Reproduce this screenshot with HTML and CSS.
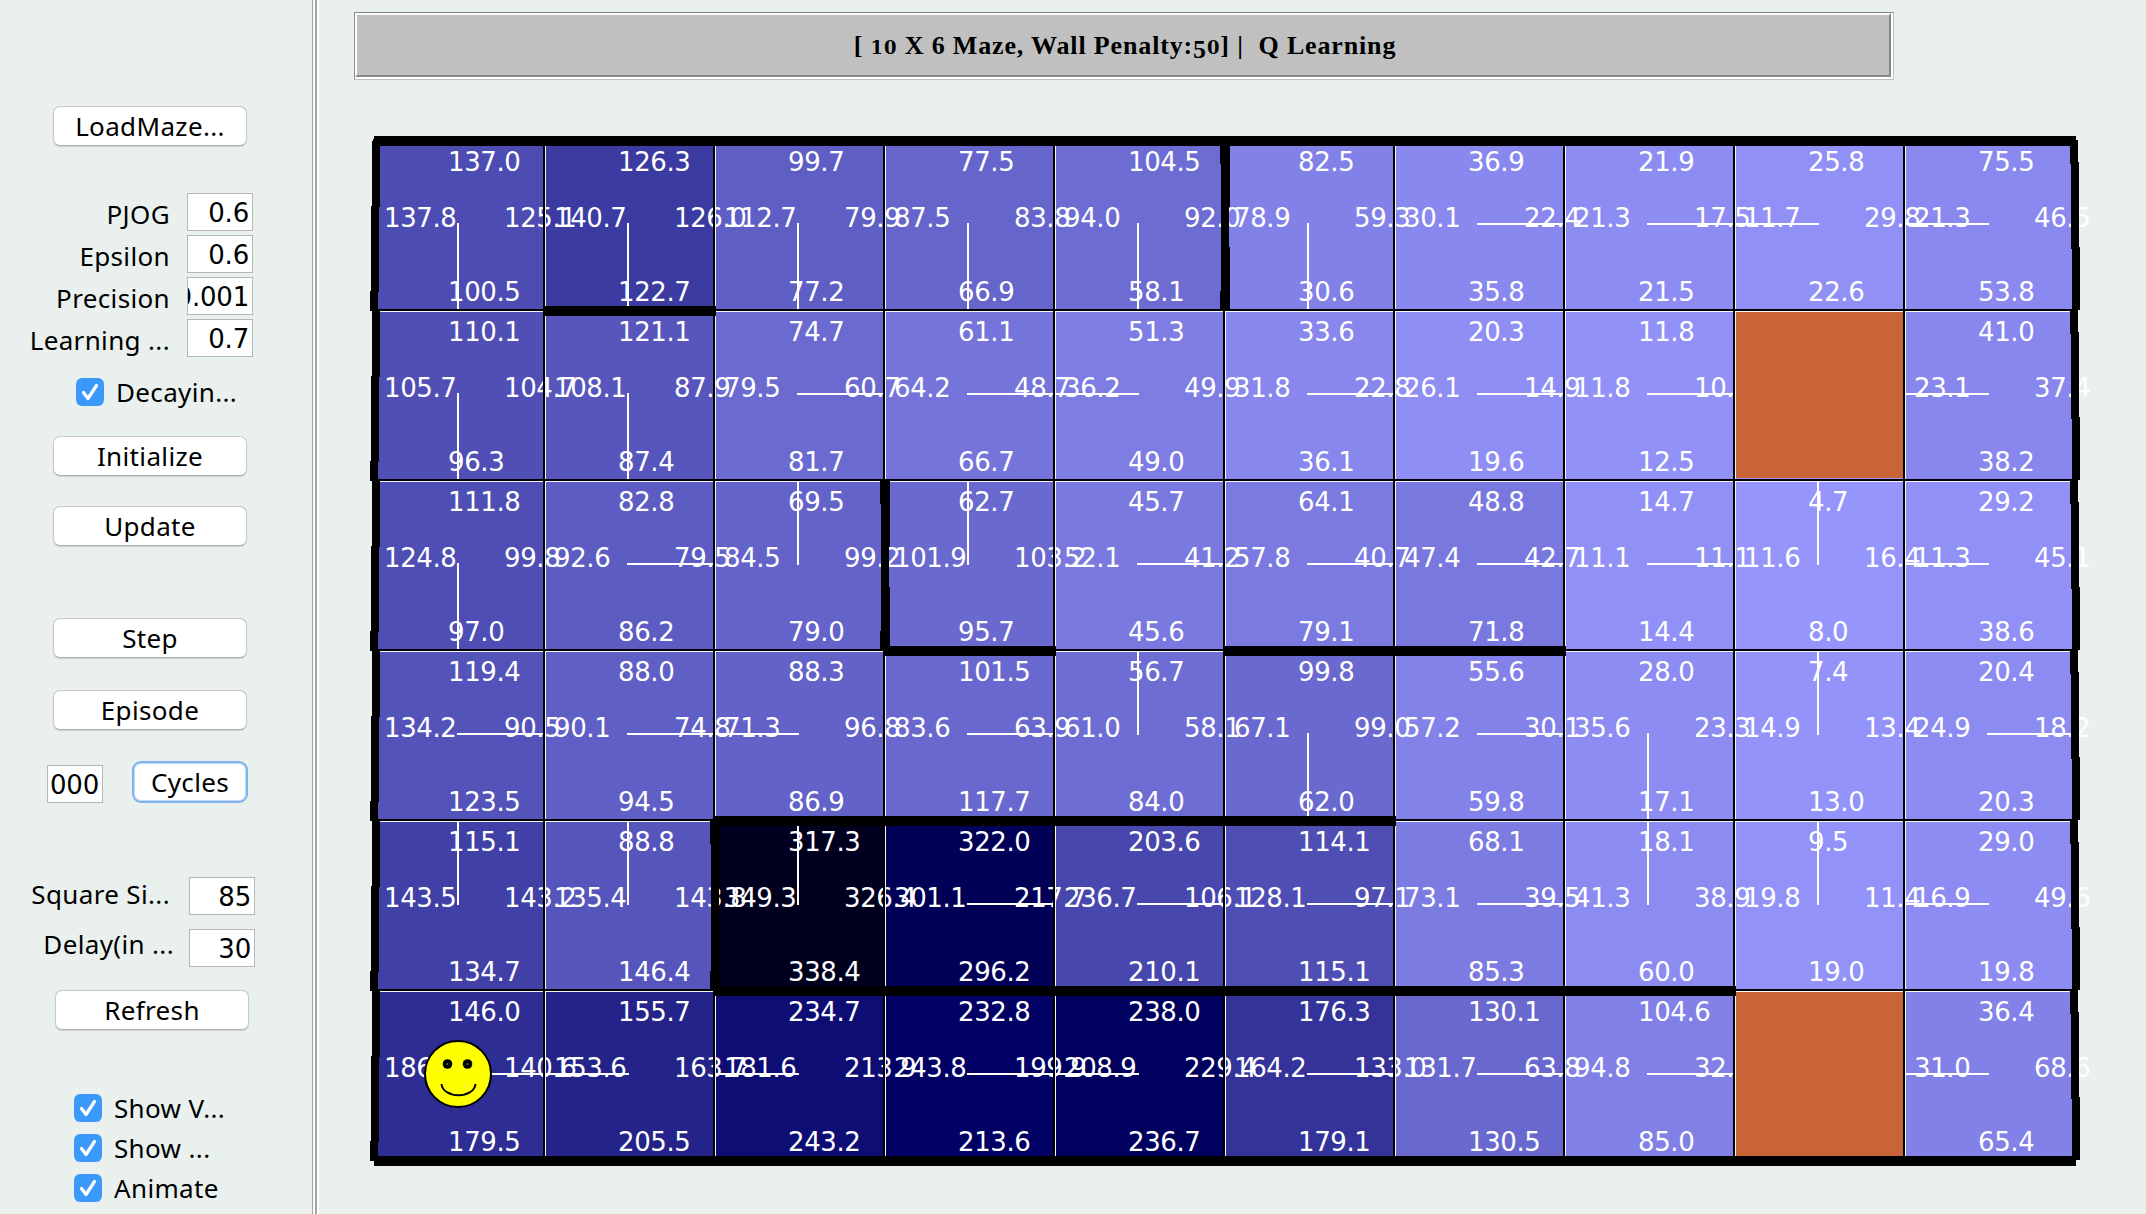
FILE: index.html
```html
<!DOCTYPE html>
<html lang="en">
<head>
<meta charset="utf-8">
<title>Q Learning Maze</title>
<link rel="stylesheet" href="styles.css">
</head>
<body>
<div class="app">
  <aside class="sidebar">
    <button class="btn load">LoadMaze...</button>
    <div class="params">
      <label class="param"><span class="name">PJOG</span><span class="field">0.6</span></label>
      <label class="param"><span class="name">Epsilon</span><span class="field">0.6</span></label>
      <label class="param"><span class="name">Precision</span><span class="field">0.001</span></label>
      <label class="param"><span class="name">Learning ...</span><span class="field">0.7</span></label>
    </div>
    <label class="check decay"><svg class="box" viewBox="0 0 28 28"><path d="M7.5 14.5 12 20.500 20.500 7.500"/></svg><span>Decayin...</span></label>
    <button class="btn init">Initialize</button>
    <button class="btn update">Update</button>
    <button class="btn step">Step</button>
    <button class="btn episode">Episode</button>
    <div class="cycles"><span class="field short">000</span><button class="btn focused">Cycles</button></div>
    <label class="param size"><span class="name">Square Si...</span><span class="field">85</span></label>
    <label class="param delay"><span class="name">Delay(in ...</span><span class="field">30</span></label>
    <button class="btn refresh">Refresh</button>
    <div class="checks">
      <label class="check"><svg class="box" viewBox="0 0 28 28"><path d="M7.500 14.500 12 20.500 20.500 7.500"/></svg><span>Show V...</span></label>
      <label class="check"><svg class="box" viewBox="0 0 28 28"><path d="M7.500 14.500 12 20.500 20.500 7.500"/></svg><span>Show ...</span></label>
      <label class="check"><svg class="box" viewBox="0 0 28 28"><path d="M7.500 14.500 12 20.500 20.500 7.500"/></svg><span>Animate</span></label>
    </div>
  </aside>
  <div class="divider"></div>
  <main class="main">
    <div class="title"><h1>[ <span class="low">10</span> X 6 Maze, Wall Penalty:<span class="drop">5</span><span class="low">0</span>] |  Q Learning</h1></div>
    <div class="board">
      <div class="cells" id="cells"></div>
      <svg class="walls" id="walls" width="1700" height="1020"></svg>
      <svg class="agent" viewBox="0 0 68 70">
        <circle cx="34" cy="35" r="33" fill="#ff0" stroke="#000" stroke-width="2"/>
        <circle cx="23.500" cy="25" r="4.800"/><circle cx="43.500" cy="25" r="4.800"/>
        <circle cx="23.500" cy="25" r="1" fill="#770"/><circle cx="43.500" cy="25" r="1" fill="#770"/>
        <path d="M17.500 45C19 60 50 60 51.500 45" fill="none" stroke="#000" stroke-width="2"/>
      </svg>
    </div>
  </main>
</div>
<script src="maze.js"></script>
</body>
</html>
```
FILE: styles.css
```css
* { box-sizing: border-box; }
body {
  margin: 0;
  background: #eaf0ee;
  color: #000;
  font: 26px/40px "Noto Sans", "Open Sans", sans-serif;
  letter-spacing: .35px;
  overflow: hidden;
}
.app { display: flex; width: 2146px; height: 1214px; }

.sidebar { width: 312px; display: flex; flex-direction: column; align-items: flex-start; padding-top: 106px; }
.btn {
  flex: none;
  width: 194px;
  height: 40px;
  margin: 0 0 0 53px;
  padding: 0;
  border: 1px solid #c6c9c8;
  border-bottom-color: #adb0af;
  border-radius: 7px;
  background: #fff;
  box-shadow: 0 1px 1px rgba(0, 0, 0, .12);
  color: #000;
  font: inherit;
  letter-spacing: inherit;
  line-height: 38px;
  text-align: center;
}
.params { display: flex; flex-direction: column; gap: 4px; margin-top: 47px; }
.param { display: flex; height: 38px; }
.name { width: 170px; padding-top: 1px; text-align: right; white-space: nowrap; }
.field {
  display: flex;
  justify-content: flex-end;
  width: 66px;
  height: 38px;
  margin-left: 17px;
  padding-right: 3px;
  border: 1px solid #b4b8b7;
  background: #fff;
  font-family: "DejaVu Sans", sans-serif;
  letter-spacing: -.2px;
  line-height: 38px;
  overflow: hidden;
}
.check { display: flex; height: 28px; line-height: 28px; gap: 12px; margin-left: 74px; white-space: nowrap; }
.box { width: 28px; height: 28px; border-radius: 6px; background: #3b99fc; }
.box path { fill: none; stroke: #fff; stroke-width: 3.200; stroke-linecap: round; stroke-linejoin: round; }
.decay { margin: 21px 0 0 76px; }
.init { margin-top: 30px; }
.update { margin-top: 30px; }
.step { margin-top: 72px; }
.episode { margin-top: 32px; }
.cycles { display: flex; align-items: flex-end; margin-top: 31px; }
.field.short { width: 56px; margin-left: 47px; margin-bottom: 0; }
.btn.focused { width: 116px; height: 42px; margin-left: 29px; border: 2px solid #7fb1ea; border-radius: 9px; box-shadow: inset 0 0 1px 1px #bcd9f7; }
.size { margin-top: 74px; }
.size .field, .delay .field { width: 66px; line-height: 38px; }
.size .name { width: 170px; padding-top: 0; margin-top: -3px; }
.size .field { margin-left: 19px; }
.delay { margin-top: 14px; }
.delay .name { width: 174px; margin-top: -6px; }
.delay .field { margin-left: 15px; }
.refresh { margin: 23px 0 0 55px; }
.checks { display: flex; flex-direction: column; gap: 12px; margin-top: 64px; }

.divider {
  width: 7px;
  border-left: 1px solid #a3a5a4;
  background: linear-gradient(90deg, #fff 2px, #a3a5a4 2px 4px, #fff 4px);
}

.main { padding: 12px 0 0 35px; }
.title {
  width: 1540px;
  height: 68px;
  border: 1px solid #888;
  border-right-color: #c0c0c0;
  border-bottom-color: #c0c0c0;
  background: #fff;
  padding: 0 2px 2px 0;
}
.title h1 {
  height: 64px;
  margin: 0;
  padding-left: 4px;
  border: 2px solid #fff;
  border-right-color: #868686;
  border-bottom-color: #868686;
  background: #c0c0c0;
  font: bold 26px/62px "Liberation Serif", serif;
  letter-spacing: .85px;
  text-align: center;
  white-space: pre;
}
.low { font: bold 18px/20px "DejaVu Serif", serif; }
.drop { display: inline-block; line-height: 20px; vertical-align: -4px; }

.board { position: relative; width: 1700px; height: 1020px; margin: 60px 0 0 20px; }
.cells { display: grid; grid-template-columns: repeat(10, 170px); grid-auto-rows: 170px; }
.cell { position: relative; color: #fff; font: 26px/30px "DejaVu Sans", sans-serif; letter-spacing: -.4px; }
.value { position: absolute; z-index: 1; white-space: nowrap; }
.value.up { left: 74px; top: 7px; }
.value.left { left: 10px; top: 63px; }
.value.right { left: 130px; top: 63px; }
.value.down { left: 74px; top: 137px; }
.policy { position: absolute; background: #fff; z-index: 1; }
.policy.up { left: 83px; top: 1px; width: 2px; height: 84px; }
.policy.down { left: 83px; top: 83px; width: 2px; height: 87px; }
.policy.left { left: 1px; top: 83px; width: 84px; height: 2px; }
.policy.right { left: 83px; top: 83px; width: 87px; height: 2px; }
.walls { position: absolute; left: 0; top: 0; z-index: 2; overflow: visible; shape-rendering: crispEdges; }
.agent { position: absolute; left: 50px; top: 899px; width: 68px; height: 70px; z-index: 3; }
```
FILE: maze.js
```js
// Each cell: [up, left, right, down, policy]; null marks a goal.
const Q = [
  [["137.0","137.8","125.1","100.5","d"],["126.3","140.7","126.0","122.7","d"],["99.7","112.7","79.9","77.2","d"],["77.5","87.5","83.8","66.9","d"],["104.5","94.0","92.0","58.1","d"],["82.5","78.9","59.3","30.6","d"],["36.9","30.1","22.4","35.8","r"],["21.9","21.3","17.5","21.5","r"],["25.8","11.7","29.8","22.6","l"],["75.5","21.3","46.5","53.8","l"]],
  [["110.1","105.7","104.7","96.3","d"],["121.1","108.1","87.9","87.4","d"],["74.7","79.5","60.7","81.7","r"],["61.1","64.2","48.7","66.7","r"],["51.3","36.2","49.9","49.0","l"],["33.6","31.8","22.8","36.1","r"],["20.3","26.1","14.9","19.6","r"],["11.8","11.8","10.","12.5","r"],null,["41.0","23.1","37.4","38.2","l"]],
  [["111.8","124.8","99.8","97.0","d"],["82.8","92.6","79.5","86.2","r"],["69.5","84.5","99.2","79.0","u"],["62.7","101.9","103.2","95.7","u"],["45.7","52.1","41.2","45.6","r"],["64.1","57.8","40.7","79.1","r"],["48.8","47.4","42.7","71.8","r"],["14.7","11.1","11.1","14.4","r"],["4.7","11.6","16.4","8.0","u"],["29.2","11.3","45.1","38.6","l"]],
  [["119.4","134.2","90.5","123.5","r"],["88.0","90.1","74.8","94.5","r"],["88.3","71.3","96.8","86.9","l"],["101.5","83.6","63.9","117.7","r"],["56.7","61.0","58.1","84.0","u"],["99.8","67.1","99.0","62.0","d"],["55.6","57.2","30.1","59.8","r"],["28.0","35.6","23.3","17.1","d"],["7.4","14.9","13.4","13.0","u"],["20.4","24.9","18.2","20.3","r"]],
  [["115.1","143.5","143.2","134.7","u"],["88.8","135.4","143.8","146.4","u"],["317.3","349.3","326.4","338.4","u"],["322.0","301.1","217.7","296.2","r"],["203.6","236.7","106.1","210.1","r"],["114.1","128.1","97.1","115.1","r"],["68.1","73.1","39.5","85.3","r"],["18.1","41.3","38.9","60.0","u"],["9.5","19.8","11.4","19.0","u"],["29.0","16.9","49.6","19.8","l"]],
  [["146.0","186.0","140.6","179.5","r"],["155.7","153.6","163.7","205.5","l"],["234.7","181.6","213.9","243.2","l"],["232.8","243.8","199.9","213.6","r"],["238.0","208.9","229.4","236.7","l"],["176.3","164.2","133.0","179.1","r"],["130.1","131.7","63.8","130.5","r"],["104.6","94.8","32.","85.0","r"],null,["36.4","31.0","68.6","65.4","l"]]
];
const SIDES = ["up", "left", "right", "down"];
const NAMES = { u: "up", l: "left", r: "right", d: "down" };
const S = 170;

const cells = document.getElementById("cells");
const rects = [];
const rect = (x, y, w, h, fill = "#000") => rects.push(`<rect x="${x}" y="${y}" width="${w}" height="${h}" fill="${fill}"/>`);

Q.forEach((row, r) => row.forEach((cell, c) => {
  const el = document.createElement("div");
  el.className = "cell";
  const cost = cell ? Math.min(...cell.slice(0, 4).map(Number)) : 0;
  const rg = Math.max(0, Math.round(153 - cost * 0.77));
  const b = Math.max(30, Math.round(255 - cost * 0.77));
  el.style.backgroundColor = `rgb(${rg}, ${rg}, ${b})`;
  if (cell) {
    el.innerHTML = SIDES.map((s, i) => `<span class="value ${s}">${cell[i]}</span>`).join("") +
      `<i class="policy ${NAMES[cell[4]]}"></i>`;
  } else {
    rect(c * S + 2, r * S + 2, 167, 166, "#c86437");
  }
  cells.append(el);
}));

// Thin grid lines with a light edge
for (let c = 1; c < 10; c++) rect(c * S + 1, 0, 1, 1020, "#f4f6ff");
for (let r = 1; r < 6; r++) rect(0, r * S + 1, 1700, 1, "#f4f6ff");
for (let c = 1; c < 10; c++) rect(c * S - 1, 0, 2, 1020);
for (let r = 1; r < 6; r++) rect(0, r * S - 1, 1700, 2);

// Walls lean slightly, one pixel at a time
const leftWall = (c, r) => {
  const x = c * S, y = r * S;
  rect(x - 2, y + 1, 8, 66); rect(x - 3, y + 66, 8, 86); rect(x - 4, y + 151, 8, 20);
};
const rightWall = (c, r) => {
  const x = c * S, y = r * S;
  rect(x - 4, y, 8, 24); rect(x - 3, y + 22, 8, 87); rect(x - 2, y + 107, 8, 63);
};
const floor = (c, r, n) => rect(c * S - 1, r * S - 4, n * S + 3, 10);
for (let r = 0; r < 6; r++) { leftWall(0, r); rightWall(10, r); }
[[5, 0], [3, 2], [2, 4]].forEach(([c, r]) => { leftWall(c, r); rightWall(c, r); });
[[1, 1, 1], [3, 3, 1], [5, 3, 2], [2, 4, 4], [2, 5, 6]].forEach(w => floor(...w));
rect(0, -4, 1702, 10);
rect(-1, -1, 2, 3);
rect(0, 1016, 1702, 10);

document.getElementById("walls").innerHTML = rects.join("");
```
